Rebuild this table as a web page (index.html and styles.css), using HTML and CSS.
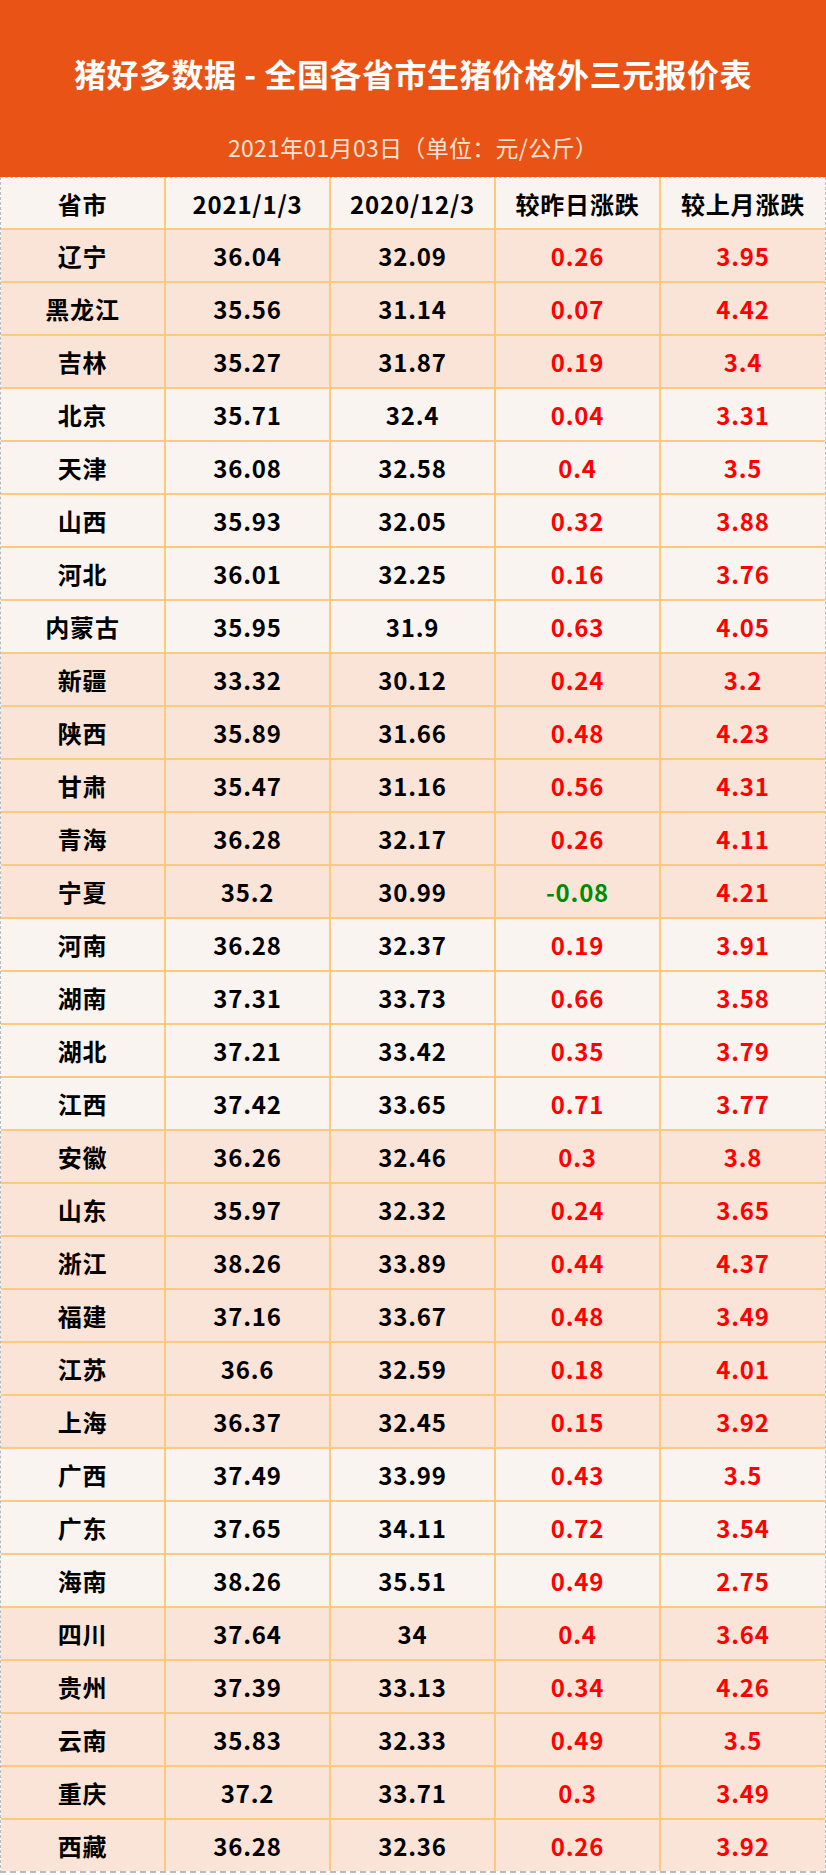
FILE: index.html
```html
<!DOCTYPE html>
<html lang="zh-CN">
<head>
<meta charset="utf-8">
<title>猪好多数据</title>
<link rel="stylesheet" href="styles.css">
</head>
<body>
<div class="page">
  <header class="banner">
    <h1 class="title">猪好多数据 - 全国各省市生猪价格外三元报价表</h1>
    <p class="subtitle">2021年01月03日（单位：元/公斤）</p>
  </header>
  <div class="table">
    <div class="row head"><div class="cell">省市</div><div class="cell">2021/1/3</div><div class="cell">2020/12/3</div><div class="cell">较昨日涨跌</div><div class="cell">较上月涨跌</div></div>
    <div class="row peach"><div class="cell">辽宁</div><div class="cell">36.04</div><div class="cell">32.09</div><div class="cell up">0.26</div><div class="cell up">3.95</div></div>
    <div class="row peach"><div class="cell">黑龙江</div><div class="cell">35.56</div><div class="cell">31.14</div><div class="cell up">0.07</div><div class="cell up">4.42</div></div>
    <div class="row peach"><div class="cell">吉林</div><div class="cell">35.27</div><div class="cell">31.87</div><div class="cell up">0.19</div><div class="cell up">3.4</div></div>
    <div class="row light"><div class="cell">北京</div><div class="cell">35.71</div><div class="cell">32.4</div><div class="cell up">0.04</div><div class="cell up">3.31</div></div>
    <div class="row light"><div class="cell">天津</div><div class="cell">36.08</div><div class="cell">32.58</div><div class="cell up">0.4</div><div class="cell up">3.5</div></div>
    <div class="row light"><div class="cell">山西</div><div class="cell">35.93</div><div class="cell">32.05</div><div class="cell up">0.32</div><div class="cell up">3.88</div></div>
    <div class="row light"><div class="cell">河北</div><div class="cell">36.01</div><div class="cell">32.25</div><div class="cell up">0.16</div><div class="cell up">3.76</div></div>
    <div class="row light"><div class="cell">内蒙古</div><div class="cell">35.95</div><div class="cell">31.9</div><div class="cell up">0.63</div><div class="cell up">4.05</div></div>
    <div class="row peach"><div class="cell">新疆</div><div class="cell">33.32</div><div class="cell">30.12</div><div class="cell up">0.24</div><div class="cell up">3.2</div></div>
    <div class="row peach"><div class="cell">陕西</div><div class="cell">35.89</div><div class="cell">31.66</div><div class="cell up">0.48</div><div class="cell up">4.23</div></div>
    <div class="row peach"><div class="cell">甘肃</div><div class="cell">35.47</div><div class="cell">31.16</div><div class="cell up">0.56</div><div class="cell up">4.31</div></div>
    <div class="row peach"><div class="cell">青海</div><div class="cell">36.28</div><div class="cell">32.17</div><div class="cell up">0.26</div><div class="cell up">4.11</div></div>
    <div class="row peach"><div class="cell">宁夏</div><div class="cell">35.2</div><div class="cell">30.99</div><div class="cell down">-0.08</div><div class="cell up">4.21</div></div>
    <div class="row light"><div class="cell">河南</div><div class="cell">36.28</div><div class="cell">32.37</div><div class="cell up">0.19</div><div class="cell up">3.91</div></div>
    <div class="row light"><div class="cell">湖南</div><div class="cell">37.31</div><div class="cell">33.73</div><div class="cell up">0.66</div><div class="cell up">3.58</div></div>
    <div class="row light"><div class="cell">湖北</div><div class="cell">37.21</div><div class="cell">33.42</div><div class="cell up">0.35</div><div class="cell up">3.79</div></div>
    <div class="row light"><div class="cell">江西</div><div class="cell">37.42</div><div class="cell">33.65</div><div class="cell up">0.71</div><div class="cell up">3.77</div></div>
    <div class="row peach"><div class="cell">安徽</div><div class="cell">36.26</div><div class="cell">32.46</div><div class="cell up">0.3</div><div class="cell up">3.8</div></div>
    <div class="row peach"><div class="cell">山东</div><div class="cell">35.97</div><div class="cell">32.32</div><div class="cell up">0.24</div><div class="cell up">3.65</div></div>
    <div class="row peach"><div class="cell">浙江</div><div class="cell">38.26</div><div class="cell">33.89</div><div class="cell up">0.44</div><div class="cell up">4.37</div></div>
    <div class="row peach"><div class="cell">福建</div><div class="cell">37.16</div><div class="cell">33.67</div><div class="cell up">0.48</div><div class="cell up">3.49</div></div>
    <div class="row peach"><div class="cell">江苏</div><div class="cell">36.6</div><div class="cell">32.59</div><div class="cell up">0.18</div><div class="cell up">4.01</div></div>
    <div class="row peach"><div class="cell">上海</div><div class="cell">36.37</div><div class="cell">32.45</div><div class="cell up">0.15</div><div class="cell up">3.92</div></div>
    <div class="row light"><div class="cell">广西</div><div class="cell">37.49</div><div class="cell">33.99</div><div class="cell up">0.43</div><div class="cell up">3.5</div></div>
    <div class="row light"><div class="cell">广东</div><div class="cell">37.65</div><div class="cell">34.11</div><div class="cell up">0.72</div><div class="cell up">3.54</div></div>
    <div class="row light"><div class="cell">海南</div><div class="cell">38.26</div><div class="cell">35.51</div><div class="cell up">0.49</div><div class="cell up">2.75</div></div>
    <div class="row peach"><div class="cell">四川</div><div class="cell">37.64</div><div class="cell">34</div><div class="cell up">0.4</div><div class="cell up">3.64</div></div>
    <div class="row peach"><div class="cell">贵州</div><div class="cell">37.39</div><div class="cell">33.13</div><div class="cell up">0.34</div><div class="cell up">4.26</div></div>
    <div class="row peach"><div class="cell">云南</div><div class="cell">35.83</div><div class="cell">32.33</div><div class="cell up">0.49</div><div class="cell up">3.5</div></div>
    <div class="row peach"><div class="cell">重庆</div><div class="cell">37.2</div><div class="cell">33.71</div><div class="cell up">0.3</div><div class="cell up">3.49</div></div>
    <div class="row peach last"><div class="cell">西藏</div><div class="cell">36.28</div><div class="cell">32.36</div><div class="cell up">0.26</div><div class="cell up">3.92</div></div>
  </div>
</div>
</body>
</html>
```
FILE: styles.css
```css
html, body {
  margin: 0;
  padding: 0;
  background: #ffffff;
}
.page {
  width: 826px;
  font-family: "Noto Sans CJK SC", "Noto Sans", sans-serif;
}
.banner {
  height: 177px;
  background: #e95316;
  display: flex;
  flex-direction: column;
  align-items: center;
  box-sizing: border-box;
  padding-top: 51px;
}
.title {
  margin: 0;
  color: #ffffff;
  font-size: 32px;
  font-weight: 700;
  line-height: 44px;
  letter-spacing: 0.5px;
}
.subtitle {
  margin: 37px 0 0 0;
  color: #fbe3d3;
  font-size: 23px;
  font-weight: 400;
  line-height: 30px;
  letter-spacing: 0.3px;
}
.table {
  border: 1px dashed #b9b9b9;
  border-top: 1px dashed #c8c8c8;
  border-bottom: 2px dashed #b9b9b9;
}
.row {
  display: grid;
  grid-template-columns: 165px 165px 165px 165px 1fr;
  height: 53px;
  box-sizing: border-box;
  border-bottom: 2px solid #fcca7e;
}
.row.last {
  border-bottom: none;
  height: 51px;
}
.row.head {
  background: #f9f4f0;
  height: 52px;
}
.row.peach {
  background: #fae4d8;
}
.row.light {
  background: #f9f4f0;
}
.cell {
  display: flex;
  align-items: center;
  justify-content: center;
  font-size: 24px;
  font-weight: 700;
  letter-spacing: 0.8px;
  color: #000000;
  border-right: 2px solid #fcca7e;
}
.cell:last-child {
  border-right: none;
}
.cell.up {
  color: #ff0000;
}
.cell.down {
  color: #008a00;
}
```
